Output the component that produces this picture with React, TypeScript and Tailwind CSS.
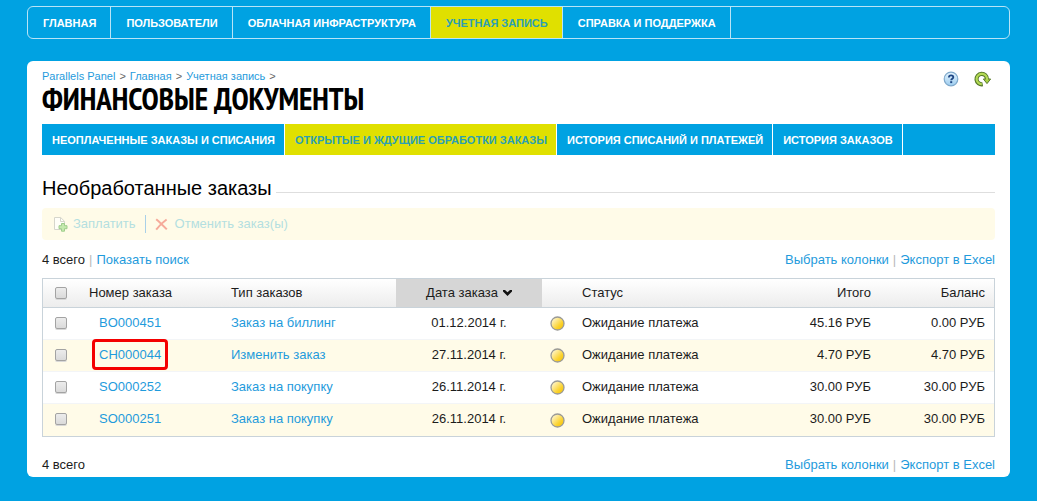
import { clsx } from "clsx";

const mainNav = [
  { label: "Главная" },
  { label: "Пользователи" },
  { label: "Облачная инфраструктура" },
  { label: "Учетная запись", active: true },
  { label: "Справка и поддержка" },
];

const tabs = [
  { label: "Неоплаченные заказы и списания" },
  { label: "Открытые и ждущие обработки заказы", active: true },
  { label: "История списаний и платежей" },
  { label: "История заказов" },
];

const orders = [
  { id: "BO000451", type: "Заказ на биллинг", date: "01.12.2014 г.", total: "45.16 РУБ", balance: "0.00 РУБ" },
  { id: "CH000044", type: "Изменить заказ", date: "27.11.2014 г.", total: "4.70 РУБ", balance: "4.70 РУБ", marked: true },
  { id: "SO000252", type: "Заказ на покупку", date: "26.11.2014 г.", total: "30.00 РУБ", balance: "30.00 РУБ" },
  { id: "SO000251", type: "Заказ на покупку", date: "26.11.2014 г.", total: "30.00 РУБ", balance: "30.00 РУБ" },
];

function HelpIcon() {
  return (
    <svg width="16" height="16" viewBox="0 0 16 16" aria-hidden>
      <defs>
        <linearGradient id="help" x1="0" y1="0" x2="0" y2="1">
          <stop offset="0" stopColor="#e4f3fd" />
          <stop offset="1" stopColor="#9dcdf0" />
        </linearGradient>
      </defs>
      <circle cx="8" cy="8" r="6.8" fill="url(#help)" stroke="#7fa9cb" strokeWidth="1.2" />
      <path d="M5.9 6.5c0-1.5 1-2.2 2.2-2.2s2.2.7 2.2 1.9c0 1.5-2.1 1.5-2.1 3" fill="none" stroke="#1f4784" strokeWidth="1.8" />
      <rect x="7.2" y="10.2" width="2" height="1.9" fill="#1f4784" />
    </svg>
  );
}

function RefreshIcon() {
  return (
    <svg width="17" height="16" viewBox="0 0 17 16" aria-hidden>
      <path d="M8.7 13.2A5.2 5.2 0 1 1 12.9 8.2" fill="none" stroke="#56792a" strokeWidth="4.2" />
      <path d="M9.4 8h7.2L13 12.600z" fill="#a9d243" stroke="#56792a" strokeLinejoin="round" />
      <path d="M7.800 13.200A5.200 5.200 0 1 1 12.900 9" fill="none" stroke="#b4da55" strokeWidth="2.200" />
    </svg>
  );
}

function PayIcon() {
  return (
    <svg width="15" height="16" viewBox="0 0 15 16" aria-hidden>
      <path d="M1.5 1.5h6.2l3.8 3.8v8.2h-10z" fill="#fffef8" stroke="#d6d6cc" />
      <path d="M7.5 1.5v4h4" fill="none" stroke="#d6d6cc" />
      <path d="M8.5 7.5h3v2.2h2.5v3h-2.5v2.500h-3v-2.500H6v-3h2.500z" fill="#c5e9ae" stroke="#9fcd8c" />
    </svg>
  );
}

function CancelIcon() {
  return (
    <svg width="13" height="13" viewBox="0 0 13 13" aria-hidden>
      <path d="M1.2 1.2C4.5 4 8 7.5 11.8 11.4M11.6 1.5C8 4 4 8 1.2 11.6" fill="none" stroke="#f6aa9a" strokeWidth="2" />
    </svg>
  );
}

function StatusBall() {
  return (
    <svg width="15" height="15" viewBox="0 0 15 15" aria-hidden>
      <defs>
        <linearGradient id="ball" x1="0" y1="0" x2="1" y2="1">
          <stop offset="0.1" stopColor="#fff8d8" />
          <stop offset="0.65" stopColor="#fbd22c" />
          <stop offset="1" stopColor="#f3bd00" />
        </linearGradient>
      </defs>
      <circle cx="7.5" cy="7.5" r="6.5" fill="url(#ball)" stroke="#9a9a96" strokeWidth="1.3" />
    </svg>
  );
}

function Checkbox({ label }: { label: string }) {
  return (
    <input
      type="checkbox"
      aria-label={label}
      className="block size-3 appearance-none rounded-xs border border-[#a3a3a3] bg-linear-to-b from-[#ececec] to-[#dadada] shadow-[0_1px_0_#d8d8d8]"
    />
  );
}

function ListActions() {
  return (
    <div className="flex gap-1">
      <a href="#columns" className="text-[#1f9bdc]">Выбрать колонки</a>
      <span className="text-[#b9b9b9]">|</span>
      <a href="#export" className="text-[#1f9bdc]">Экспорт в Excel</a>
    </div>
  );
}

export default function App() {
  return (
    <div className="min-h-screen bg-[#00a2e2] px-[27px] pt-[6px] pb-6 font-['Liberation_Sans',Arial,sans-serif] text-[13px] leading-4 text-[#1c1c1c]">
      <nav className="flex h-[33px] overflow-hidden rounded-md border border-[#b8e4f7] text-[11px] font-bold uppercase">
        {mainNav.map((item) => (
          <a
            key={item.label}
            href="#nav"
            className={clsx(
              "flex items-center border-r border-[#b8e4f7] pr-[14px] pl-[15px]",
              item.active ? "bg-[#e0e000] text-[#2b9fb4]" : "text-white",
            )}
          >
            {item.label}
          </a>
        ))}
      </nav>

      <main className="mt-[22px] rounded-md bg-white px-[15px] pt-2 pb-1">
        <header className="flex items-start justify-between">
          <div>
            <div className="flex gap-1 text-[11px] leading-[14px] text-[#666]">
              <a href="#panel" className="text-[#1f9bdc]">Parallels Panel</a>
              <span>&gt;</span>
              <a href="#home" className="text-[#1f9bdc]">Главная</a>
              <span>&gt;</span>
              <a href="#account" className="text-[#1f9bdc]">Учетная запись</a>
              <span>&gt;</span>
            </div>
            <h1 className="font-['PT_Sans_Narrow','Open_Sans_Condensed','Liberation_Sans_Narrow','Liberation_Sans',sans-serif] text-[31px] leading-8 font-bold text-black uppercase">
              Финансовые документы
            </h1>
          </div>
          <div className="flex gap-[15px] pt-[2px] pr-1">
            <button type="button" aria-label="Справка"><HelpIcon /></button>
            <button type="button" aria-label="Обновить"><RefreshIcon /></button>
          </div>
        </header>

        <nav className="mt-[9px] flex h-[31px] bg-[#00a2e2] text-[11px] font-bold uppercase">
          {tabs.map((tab) => (
            <a
              key={tab.label}
              href="#tab"
              className={clsx(
                "flex items-center border-r border-white pr-[9px] pl-[10px]",
                tab.active ? "bg-[#e0e000] text-[#2b9fb4]" : "text-white",
              )}
            >
              {tab.label}
            </a>
          ))}
        </nav>

        <div className="mt-[21px] flex items-center gap-1">
          <h2 className="text-xl leading-6 text-black">Необработанные заказы</h2>
          <div className="mt-2 h-px flex-1 bg-[#dedede]" />
        </div>

        <div className="mt-2 flex h-8 items-center rounded-sm bg-[#fffbe8] px-[11px] text-[#b4dfe0]">
          <button type="button" disabled className="flex items-center gap-[5px]">
            <PayIcon />
            Заплатить
          </button>
          <span className="mx-[9px] h-[18px] w-px bg-[#a9d0e8]" />
          <button type="button" disabled className="flex items-center gap-[7px]">
            <CancelIcon />
            Отменить заказ(ы)
          </button>
        </div>

        <div className="mt-3 flex justify-between">
          <div className="flex gap-1">
            <span>4 всего</span>
            <span className="text-[#b9b9b9]">|</span>
            <a href="#search" className="text-[#1f9bdc]">Показать поиск</a>
          </div>
          <ListActions />
        </div>

        <table className="mt-[10px] w-full table-fixed border-separate border-spacing-0 border border-[#c9d3da] text-left">
          <colgroup>
            <col className="w-9" />
            <col className="w-[142px]" />
            <col className="w-[175px]" />
            <col className="w-[146px]" />
            <col className="w-[30px]" />
            <col />
            <col className="w-[130px]" />
            <col className="w-[114px]" />
          </colgroup>
          <thead>
            <tr className="h-[29px] bg-linear-to-b from-white to-[#ececec] *:border-b *:border-[#c9d3da] *:font-normal">
              <th className="pl-3"><Checkbox label="Выбрать все" /></th>
              <th className="pl-[10px]">Номер заказа</th>
              <th className="pl-[10px]">Тип заказов</th>
              <th className="bg-[#d6d6d6]">
                <button type="button" className="flex w-full items-center justify-center gap-[5px]">
                  Дата заказа
                  <svg width="9" height="6" viewBox="0 0 9 6" aria-hidden>
                    <path d="M0 0h2l2.5 2.3L7 0h2v1.6L4.5 6 0 1.6z" fill="#111" />
                  </svg>
                </button>
              </th>
              <th aria-label="Индикатор" />
              <th className="pl-[10px]">Статус</th>
              <th className="pr-[9px] text-right">Итого</th>
              <th className="pr-[9px] text-right">Баланс</th>
            </tr>
          </thead>
          <tbody>
            {orders.map((order) => (
              <tr key={order.id} className="h-8 *:pb-[2px] even:bg-[#fffbe8] [&:not(:last-child)>td]:border-b [&:not(:last-child)>td]:border-[#f3f5f7]">
                <td className="pl-3"><Checkbox label={order.id} /></td>
                <td className="pl-5">
                  <span className="relative">
                    <a href="#order" className="text-[#1f9bdc]">{order.id}</a>
                    {order.marked && (
                      <span className="pointer-events-none absolute -inset-x-[7px] -inset-y-2 rounded-sm border-3 border-[#f40000]" />
                    )}
                  </span>
                </td>
                <td className="pl-[10px]"><a href="#order" className="text-[#1f9bdc]">{order.type}</a></td>
                <td className="text-center">{order.date}</td>
                <td className="pt-[2px] pl-2"><StatusBall /></td>
                <td className="pl-[10px]">Ожидание платежа</td>
                <td className="pr-[9px] text-right">{order.total}</td>
                <td className="pr-[9px] text-right">{order.balance}</td>
              </tr>
            ))}
          </tbody>
        </table>

        <div className="mt-5 flex justify-between">
          <span>4 всего</span>
          <ListActions />
        </div>
      </main>
    </div>
  );
}
